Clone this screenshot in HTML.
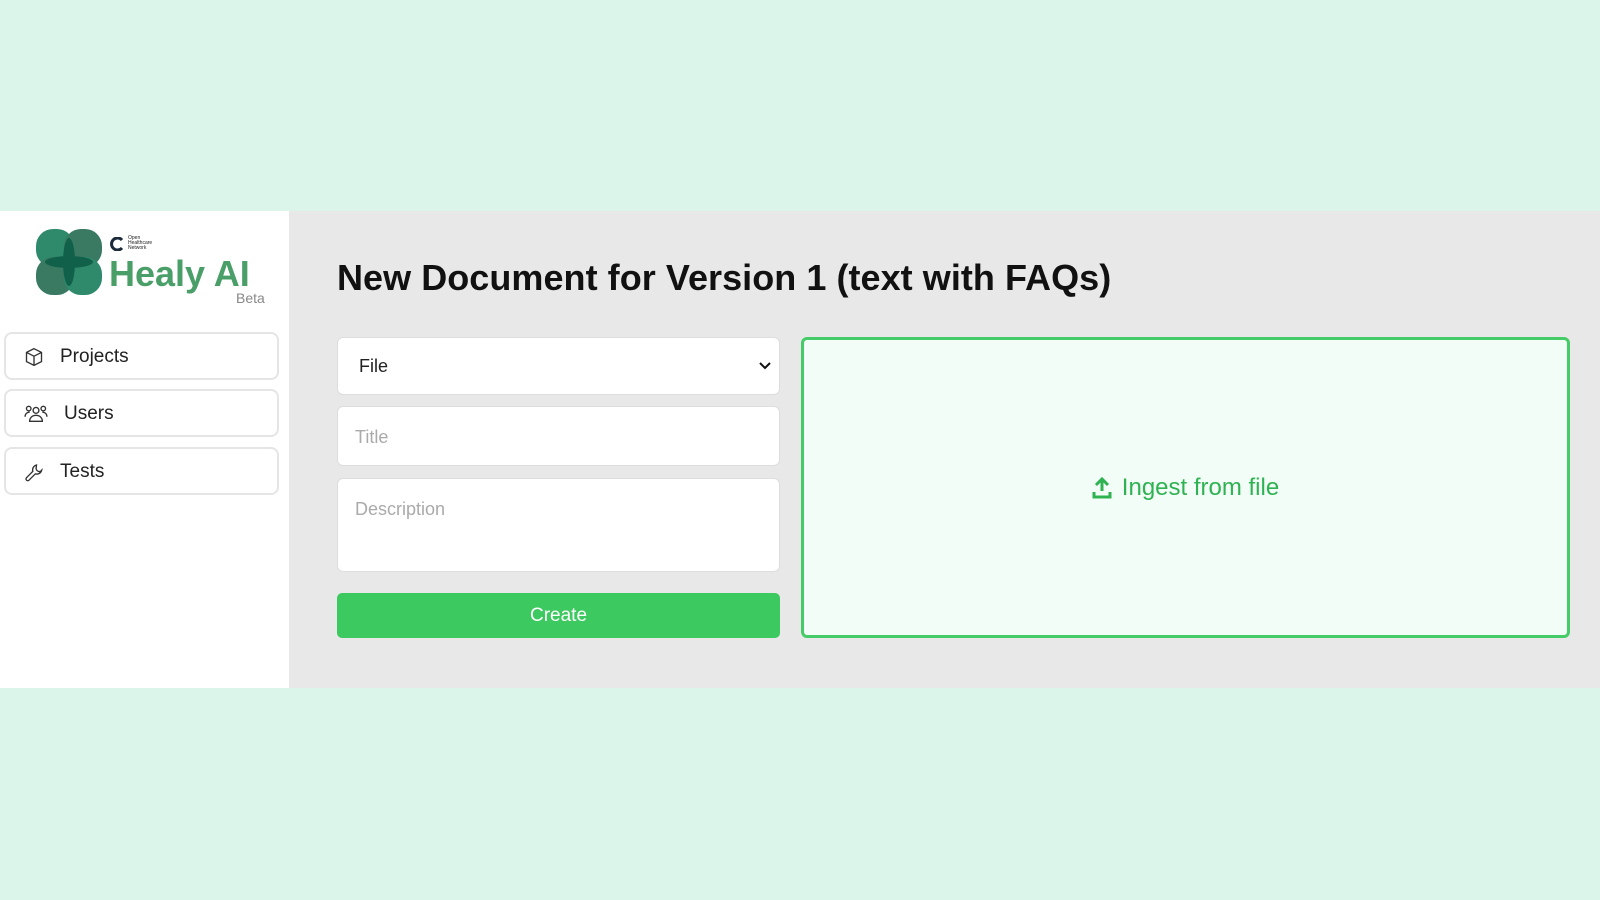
<!DOCTYPE html>
<html><head><style>
*{box-sizing:border-box;margin:0;padding:0}
body{width:1600px;height:900px;background:#dcf5ea;font-family:"Liberation Sans",sans-serif;position:relative;overflow:hidden}
#main{position:absolute;left:0;top:211px;width:1600px;height:477px;background:#e8e8e8}
#side{position:absolute;left:0;top:0;width:289px;height:477px;background:#fff}
.nav{position:absolute;left:4px;width:275px;height:48px;border:2px solid #e5e5e5;border-radius:8px;font-size:19px;color:#222;display:flex;align-items:center;padding-top:2px}
.nav svg{margin-left:18px;margin-right:16px}
h1{position:absolute;left:337px;top:46px;font-size:36px;font-weight:bold;color:#111;letter-spacing:0.05px}
.inp{position:absolute;left:337px;width:443px;background:#fff;border:1px solid #ddd;border-radius:6px;font-size:18px;color:#aaa;padding-left:17px}
</style></head><body>
<div id="main">
<div id="side">
<svg style="position:absolute;left:36px;top:18px" width="66" height="66" viewBox="0 0 66 66">
<rect x="0" y="0" width="38" height="38" rx="17" fill="#2f8a6c"/>
<rect x="28" y="0" width="38" height="38" rx="17" fill="#3a7a62"/>
<rect x="0" y="28" width="38" height="38" rx="17" fill="#3a7a62"/>
<rect x="28" y="28" width="38" height="38" rx="17" fill="#2f8a6c"/>
<ellipse cx="33" cy="33" rx="6" ry="24" fill="#11604a"/>
<ellipse cx="33" cy="33" rx="24" ry="6" fill="#11604a"/>
</svg>
<svg style="position:absolute;left:109px;top:26px" width="18" height="14" viewBox="0 0 18 14"><path d="M13 3A6 6 0 1 0 13 11" stroke="#1a2a3a" stroke-width="3" fill="none"/></svg>
<div style="position:absolute;left:128px;top:25px;font-size:5px;line-height:5px;color:#222">Open<br>Healthcare<br>Network</div>
<div style="position:absolute;left:109px;top:42px;font-size:36px;font-weight:bold;color:#4a9e68">Healy AI</div>
<div style="position:absolute;left:236px;top:79px;font-size:14px;color:#888">Beta</div>
<div class="nav" style="top:121px"><svg width="20" height="20" viewBox="0 0 24 24" fill="none" stroke="#333" stroke-width="1.6"><path d="M12 2 21 6.5v11L12 22 3 17.5v-11z M3 6.5 12 11l9-4.5 M12 11v11"/></svg>Projects</div>
<div class="nav" style="top:178px"><svg width="24" height="20" viewBox="0 0 26 22" fill="none" stroke="#333" stroke-width="1.5"><circle cx="13" cy="7" r="3.2"/><circle cx="5" cy="5" r="2.5"/><circle cx="21" cy="5" r="2.5"/><path d="M6 19c0-4 3-6.5 7-6.5s7 2.5 7 6.5z M1 14c0-3 2-5 5-5 M25 14c0-3-2-5-5-5"/></svg>Users</div>
<div class="nav" style="top:236px"><svg width="20" height="20" viewBox="0 0 24 24" fill="none" stroke="#333" stroke-width="1.6"><path d="M14.7 6.3a4 4 0 0 0 5 5l1.5-1.5a6 6 0 0 1-7.6 4.4L6 21.8a2 2 0 0 1-3-3l7.6-7.6A6 6 0 0 1 15 3.6z"/></svg>Tests</div>
</div>
<h1>New Document for Version 1 (text with FAQs)</h1>
<div class="inp" style="top:126px;height:58px;color:#222;display:flex;align-items:center;padding-left:21px">File<svg style="position:absolute;right:8px;top:23px" width="12" height="10" viewBox="0 0 12 10"><path d="M1 2l5 5 5-5" stroke="#111" stroke-width="2" fill="none"/></svg></div>
<div class="inp" style="top:195px;height:60px;line-height:60px">Title</div>
<div class="inp" style="top:267px;height:94px;padding-top:20px">Description</div>
<div style="position:absolute;left:337px;top:382px;width:443px;height:45px;background:#3cc95f;border-radius:5px;color:#fff;font-size:19px;text-align:center;line-height:45px">Create</div>
<div style="position:absolute;left:801px;top:126px;width:769px;height:301px;background:#f3fdf7;border:3px solid #45cc68;border-radius:6px;display:flex;align-items:center;justify-content:center;color:#2fb352;font-size:24px">
<svg width="20" height="22" viewBox="0 0 20 22" style="margin-right:10px"><path d="M10 2v12 M4 8l6-6 6 6 M2 15v5h16v-5" stroke="#2fb352" stroke-width="3" fill="none"/></svg>Ingest from file</div>
</div>
</body></html>
